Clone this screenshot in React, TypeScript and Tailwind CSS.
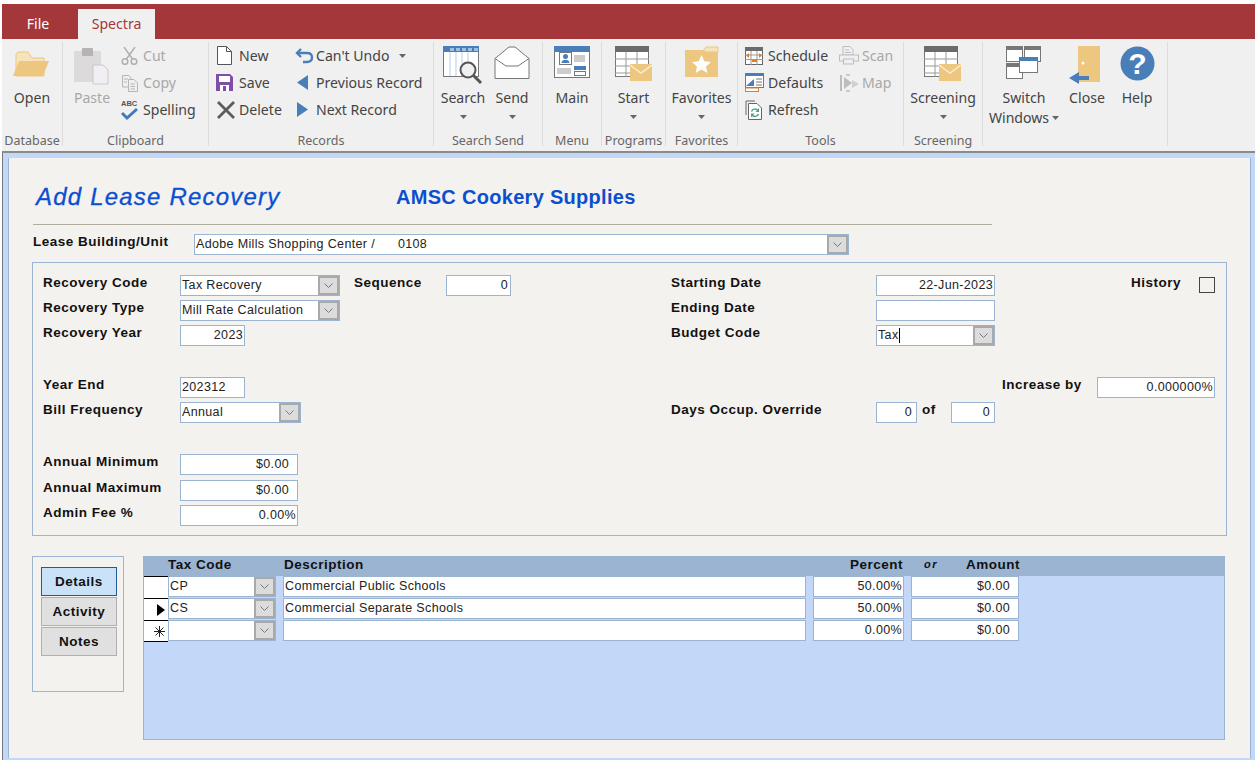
import React from 'react';

const OpenIcon = () => (
  <svg width="38" height="40" viewBox="0 0 38 40">
    <path d="M3 8V30H31V12H19L15 6H5Z" fill="#f6e3bd" stroke="#edc77f" />
    <path d="M0 30 L6 15H36L30 30Z" fill="#edc77f" />
  </svg>
);

const PasteIcon = () => (
  <svg width="36" height="40" viewBox="0 0 36 40">
    <rect x="0" y="5" width="27" height="31" fill="#dcdada" />
    <rect x="8" y="2" width="11" height="8" rx="1" fill="#b5b3b3" />
    <path d="M19 19H29L34 24V38H19Z" fill="#f1eff4" stroke="#c9c7cc" />
  </svg>
);

const CutIcon = () => (
  <svg width="17" height="18" viewBox="0 0 17 18" fill="none" stroke="#b0b0b0" strokeWidth="1.500">
    <path d="M3 0L11.500 12M14 0L5.500 12" />
    <circle cx="4" cy="14.500" r="2.800" />
    <circle cx="13" cy="14.500" r="2.800" />
  </svg>
);

const CopyIcon = () => (
  <svg width="18" height="18" viewBox="0 0 18 18" fill="none" stroke="#b5b5b5">
    <path d="M1.500 1.500H8L10 4V13H1.500Z" fill="#f0f0f0" />
    <path d="M7.500 5.500H13L16.500 9V17.500H7.500Z" fill="#f0f0f0" />
    <path d="M3 5H7M3 8H6M9.500 10H14M9.500 12.500H14M9.500 15H14" />
  </svg>
);

const SpellIcon = () => (
  <svg width="18" height="22" viewBox="0 0 18 22">
    <text x="0" y="7" fontSize="7.500" fontWeight="700" fontFamily="Liberation Sans, sans-serif" fill="#555">ABC</text>
    <path d="M1 14L6 19L16 10" fill="none" stroke="#3f7cba" strokeWidth="3" />
  </svg>
);

const NewIcon = () => (
  <svg width="17" height="19" viewBox="0 0 17 19">
    <path d="M1.500 .5H10.500L15.500 5.500V18.500H1.500Z" fill="#fff" stroke="#555" />
    <path d="M10.500 .5V5.500H15.500" fill="none" stroke="#555" />
  </svg>
);

const SaveIcon = () => (
  <svg width="17" height="17" viewBox="0 0 17 17">
    <path d="M0 0H14L17 3V17H0Z" fill="#7d4fa8" />
    <rect x="3" y="2" width="11" height="6" fill="#fff" />
    <rect x="4" y="11" width="9" height="6" fill="#fff" />
    <rect x="7" y="12" width="3" height="5" fill="#7d4fa8" />
  </svg>
);

const DeleteIcon = () => (
  <svg width="20" height="18" viewBox="0 0 20 18">
    <path d="M2 1L18 17M18 1L2 17" stroke="#5c5c5c" strokeWidth="2.800" />
  </svg>
);

const UndoIcon = () => (
  <svg width="19" height="16" viewBox="0 0 19 16" fill="none" stroke="#4a7eb8" strokeWidth="2.400">
    <path d="M6 1L2 5L6 9" />
    <path d="M2 5H12C15.500 5 17 7 17 9.500C17 12 15.500 14 12 14H8" />
  </svg>
);

const PrevIcon = () => (
  <svg width="11" height="15" viewBox="0 0 11 15">
    <path d="M11 0V15L0 7.500Z" fill="#4a7eb8" />
  </svg>
);

const NextIcon = () => (
  <svg width="11" height="15" viewBox="0 0 11 15">
    <path d="M0 0V15L11 7.500Z" fill="#4a7eb8" />
  </svg>
);

const SearchIcon = () => (
  <svg width="40" height="39" viewBox="0 0 40 39">
    <rect x=".5" y=".5" width="35" height="30" fill="#fff" stroke="#777" />
    <rect x="0" y="0" width="36" height="6" fill="#4a7eb8" />
    <path d="M7 2H11V5H7ZM13 2H17V5H13ZM19 2H23V5H19ZM25 2H29V5H25ZM31 2H35V5H31Z" fill="#9dbfe0" />
    <path d="M7 6V30M13 6V30M19 6V30M25 6V30" stroke="#b5cde8" />
    <circle cx="25" cy="24" r="7.500" fill="#f0f0f0" stroke="#555" strokeWidth="2" />
    <path d="M30.500 29.500L38 37" stroke="#555" strokeWidth="3" />
  </svg>
);

const SendIcon = () => (
  <svg width="36" height="34" viewBox="0 0 36 34" fill="#fff" stroke="#777">
    <path d="M1 12.500L15 1H21L35 12.500V32.500H1Z" />
    <path d="M1 12.500L12 20H24L35 12.500" fill="none" />
  </svg>
);

const MainIcon = () => (
  <svg width="36" height="32" viewBox="0 0 36 32">
    <rect x=".5" y=".5" width="35" height="31" fill="#fff" stroke="#777" />
    <rect x="0" y="0" width="36" height="6" fill="#4a7eb8" />
    <rect x="5.500" y="6.500" width="12" height="12" fill="#fff" stroke="#777" />
    <circle cx="11.500" cy="10.500" r="2.500" fill="#4a7eb8" />
    <path d="M7.500 17C7.500 12.500 15.500 12.500 15.500 17Z" fill="#4a7eb8" />
    <rect x="20" y="9" width="11" height="7" fill="#ccc" />
    <rect x="3" y="22" width="14" height="6" fill="#ccc" />
    <rect x="20" y="20" width="12" height="4" fill="#4a7eb8" />
    <rect x="20.500" y="25.500" width="11" height="4" fill="#fff" stroke="#777" />
  </svg>
);

const GridMailIcon = () => (
  <svg width="38" height="36" viewBox="0 0 38 36">
    <rect x=".5" y=".5" width="33" height="30" fill="#fff" stroke="#777" />
    <rect x="0" y="0" width="34" height="6" fill="#6b6b6b" />
    <path d="M0 13H34M0 20H34M0 27H34M11 6V31M22 6V31" stroke="#999" />
    <rect x="15" y="18" width="22" height="17" fill="#edc77f" />
    <path d="M15 19L26 27L37 19" fill="none" stroke="#fbeed2" strokeWidth="1.500" />
  </svg>
);

const FavIcon = () => (
  <svg width="34" height="32" viewBox="0 0 34 32">
    <path d="M18 5L21 1H33V6H18Z" fill="#f6e3bd" stroke="#edc77f" />
    <path d="M0 4H18L21 6H33V31H0Z" fill="#edc77f" />
    <path d="M16.500 9L19.300 15.200L26 15.900L21 20.400L22.400 27L16.500 23.600L10.600 27L12 20.400L7 15.900L13.700 15.200Z" fill="#fff" />
  </svg>
);

const ScheduleIcon = () => (
  <svg width="18" height="18" viewBox="0 0 18 18">
    <rect x=".5" y=".5" width="17" height="17" fill="#fff" stroke="#666" />
    <rect x="0" y="0" width="18" height="4" fill="#6b6b6b" />
    <path d="M0 8H18M0 12.500H18M6 4V18M12 4V18" stroke="#999" />
    <path d="M4 6L1 8.500L4 11ZM14 6L17 8.500L14 11Z" fill="#e0802c" />
    <path d="M7 14H12" stroke="#e0802c" strokeWidth="2" />
  </svg>
);

const DefaultsIcon = () => (
  <svg width="20" height="19" viewBox="0 0 20 19">
    <rect x=".5" y=".5" width="18" height="14" fill="#fff" stroke="#777" />
    <rect x="0" y="0" width="19" height="3" fill="#4a7eb8" />
    <path d="M1 13L9 6V13Z" fill="#4a7eb8" />
    <path d="M11 6H17M11 9H17M11 12H17" stroke="#777" />
    <rect x=".5" y="15" width="13" height="3.500" fill="#fff" stroke="#e0802c" />
  </svg>
);

const RefreshIcon = () => (
  <svg width="18" height="20" viewBox="0 0 18 20" fill="none">
    <path d="M1 1H10M1 1V15" stroke="#666" />
    <path d="M3.500 3.500H12L16.500 8V19.500H3.500Z" fill="#fff" stroke="#666" />
    <path d="M6.500 11.500C7.500 8.500 11.500 8.500 13 10.500M13.500 14C12.500 17 8.500 17 7 15" stroke="#4fa085" strokeWidth="1.500" />
    <path d="M14 8V12H10.500ZM6 17.500V13.500H9.500Z" fill="#4fa085" />
  </svg>
);

const ScanIcon = () => (
  <svg width="20" height="19" viewBox="0 0 20 19" fill="#f0f0f0" stroke="#bdbdbd">
    <path d="M4 .5H11L14 3.500V9H4Z" />
    <rect x=".5" y="9" width="19" height="6" />
    <rect x="4.500" y="13" width="10" height="5" />
    <path d="M6 4H10M6 6.500H12" fill="none" />
  </svg>
);

const MapIcon = () => (
  <svg width="20" height="18" viewBox="0 0 20 18">
    <path d="M1 1H3V17H1Z" fill="#bdbdbd" />
    <path d="M5 3L13 9L5 15Z" fill="#bdbdbd" />
    <path d="M13 6L20 10L13 14Z" fill="#cfcfcf" />
    <path d="M7 1H11M7 17H11" stroke="#bdbdbd" strokeWidth="1.500" />
  </svg>
);

const SwitchIcon = () => (
  <svg width="36" height="33" viewBox="0 0 36 33">
    <rect x=".5" y=".5" width="16" height="15" fill="#fff" stroke="#777" />
    <rect x="0" y="0" width="17" height="4" fill="#777" />
    <rect x="18.500" y=".5" width="16" height="15" fill="#fff" stroke="#777" />
    <rect x="18" y="0" width="17" height="4" fill="#777" />
    <rect x=".5" y="17.500" width="16" height="15" fill="#fff" stroke="#777" />
    <rect x="0" y="17" width="17" height="4" fill="#777" />
    <rect x="13.500" y="11.500" width="18" height="15" fill="#fff" stroke="#777" />
    <rect x="13" y="11" width="19" height="4" fill="#4a7eb8" />
  </svg>
);

const CloseIcon = () => (
  <svg width="36" height="38" viewBox="0 0 36 38">
    <rect x="9" y="0" width="22" height="36" fill="#edc77f" />
    <circle cx="14" cy="17" r="1.500" fill="#fff" />
    <path d="M0 32L10 26V30H20V34H10V38Z" fill="#4a7eb8" />
  </svg>
);

const HelpIcon = () => (
  <svg width="35" height="35" viewBox="0 0 36 36">
    <circle cx="18" cy="18" r="17.500" fill="#4a7eb8" />
    <text x="18" y="29" textAnchor="middle" fontSize="31" fontWeight="700" fontFamily="Liberation Sans, sans-serif" fill="#fff">?</text>
  </svg>
);

const Caret = () => (
  <svg width="7" height="4" viewBox="0 0 7 4" className="shrink-0">
    <path d="M0 0H7L3.500 4Z" fill="#666" />
  </svg>
);

const Group = ({ label, width, children }: { label?: string; width: string; children: React.ReactNode }) => (
  <div className={`${width} h-[104px] shrink-0 flex flex-col border-r border-[#dcdcdc]`}>
    <div className="h-[92px] shrink-0 flex">{children}</div>
    <div className="shrink-0 text-center text-[12.500px] leading-[14px] text-[#666] whitespace-nowrap">{label}</div>
  </div>
);

const Big = ({ width, icon, label, caret, off }: { width: string; icon: React.ReactNode; label: string; caret?: boolean; off?: boolean }) => (
  <div className={`${width} flex flex-col items-center`}>
    <div className="h-[45px] pt-[4px] flex justify-center">{icon}</div>
    <div className={`h-[22px] leading-[22px] text-[14.100px] whitespace-nowrap ${off ? 'text-[#a8a8a8]' : 'text-[#444]'}`}>{label}</div>
    {caret && <div className="h-[16px] flex items-center"><Caret /></div>}
  </div>
);

const Small = ({ iconWidth, icon, label, off, caret }: { iconWidth: string; icon: React.ReactNode; label: string; off?: boolean; caret?: boolean }) => (
  <div className="h-[27px] flex items-center whitespace-nowrap">
    <div className={`${iconWidth} shrink-0 flex items-center`}>{icon}</div>
    <span className={`text-[14.100px] ${off ? 'text-[#a8a8a8]' : 'text-[#444]'}`}>{label}</span>
    {caret && <span className="ml-[9px]"><Caret /></span>}
  </div>
);

const Ribbon = () => (
  <div className="h-[112px] pt-[3px] bg-[#f0f0f0] flex font-['Noto_Sans',sans-serif]">
    <Group label="Database" width="w-[61px]">
      <Big width="w-[60px]" icon={<OpenIcon />} label="Open" />
    </Group>
    <Group label="Clipboard" width="w-[146px]">
      <div className="ml-[9px] mr-[9px] w-[40px]">
        <Big width="w-full" icon={<PasteIcon />} label="Paste" off />
      </div>
      <div className="flex flex-col">
        <Small iconWidth="w-[22px]" icon={<CutIcon />} label="Cut" off />
        <Small iconWidth="w-[22px]" icon={<CopyIcon />} label="Copy" off />
        <Small iconWidth="w-[22px]" icon={<SpellIcon />} label="Spelling" />
      </div>
    </Group>
    <Group label="Records" width="w-[225px]">
      <div className="ml-[7px] w-[79px] flex flex-col">
        <Small iconWidth="w-[23px]" icon={<NewIcon />} label="New" />
        <Small iconWidth="w-[23px]" icon={<SaveIcon />} label="Save" />
        <Small iconWidth="w-[23px]" icon={<DeleteIcon />} label="Delete" />
      </div>
      <div className="flex flex-col">
        <Small iconWidth="w-[21px]" icon={<UndoIcon />} label="Can't Undo" caret />
        <Small iconWidth="w-[21px]" icon={<span className="ml-[2px]"><PrevIcon /></span>} label="Previous Record" />
        <Small iconWidth="w-[21px]" icon={<span className="ml-[2px]"><NextIcon /></span>} label="Next Record" />
      </div>
    </Group>
    <Group label="Search Send" width="w-[109px]">
      <div className="ml-[4px] flex">
        <Big width="w-[50px]" icon={<SearchIcon />} label="Search" caret />
        <Big width="w-[48px]" icon={<SendIcon />} label="Send" caret />
      </div>
    </Group>
    <Group label="Menu" width="w-[59px]">
      <Big width="w-full" icon={<MainIcon />} label="Main" />
    </Group>
    <Group label="Programs" width="w-[64px]">
      <Big width="w-full" icon={<GridMailIcon />} label="Start" caret />
    </Group>
    <Group label="Favorites" width="w-[72px]">
      <Big width="w-full" icon={<FavIcon />} label="Favorites" caret />
    </Group>
    <Group label="Tools" width="w-[166px]">
      <div className="ml-[7px] w-[94px] flex flex-col">
        <Small iconWidth="w-[23px]" icon={<ScheduleIcon />} label="Schedule" />
        <Small iconWidth="w-[23px]" icon={<DefaultsIcon />} label="Defaults" />
        <Small iconWidth="w-[23px]" icon={<RefreshIcon />} label="Refresh" />
      </div>
      <div className="flex flex-col">
        <Small iconWidth="w-[23px]" icon={<ScanIcon />} label="Scan" off />
        <Small iconWidth="w-[23px]" icon={<MapIcon />} label="Map" off />
      </div>
    </Group>
    <Group label="Screening" width="w-[79px]">
      <Big width="w-full" icon={<GridMailIcon />} label="Screening" caret />
    </Group>
    <Group width="w-[185px]">
      <div className="ml-[7px] flex">
        <div className="w-[68px] flex flex-col items-center">
          <div className="h-[45px] pt-[4px]"><SwitchIcon /></div>
          <div className="h-[22px] leading-[22px] text-[14.100px] text-[#444]">Switch</div>
          <div className="leading-[18px] text-[14.100px] text-[#444] whitespace-nowrap flex items-center gap-[3px]">Windows <Caret /></div>
        </div>
        <Big width="w-[58px]" icon={<CloseIcon />} label="Close" />
        <Big width="w-[42px]" icon={<HelpIcon />} label="Help" />
      </div>
    </Group>
  </div>
);

const labelCls = "text-[13.500px] leading-[15px] font-bold tracking-[0.5px] text-[#111] whitespace-nowrap";
const valueCls = "text-[12.500px] tracking-[0.35px] text-[#222] whitespace-pre";

const Field = ({ width, value, right, pad = '' }: { width: string; value?: string; right?: boolean; pad?: string }) => (
  <div className={`${width} h-[21px] shrink-0 bg-white border border-[#9ab4d2] flex items-center pl-[1px] ${pad || 'pr-[1px]'} ${right ? 'justify-end' : ''} ${valueCls}`}>
    {value}
  </div>
);

const Chevron = () => (
  <svg width="9" height="5" viewBox="0 0 9 5" fill="none" stroke="#777">
    <path d="M.5 .5L4.500 4.500L8.500 .5" />
  </svg>
);

const Combo = ({ width, value, cursor }: { width: string; value?: string; cursor?: boolean }) => (
  <div className={`${width} h-[21px] shrink-0 bg-white border border-[#9ab4d2] flex items-center ${valueCls}`}>
    <span className="flex-1 pl-[1px] flex items-center overflow-hidden">
      {value}
      {cursor && <span className="w-px h-[15px] bg-black" />}
    </span>
    <span className="w-[21px] h-full shrink-0 bg-[#dcdcdc] border-2 border-[#a9a9a9] flex items-center justify-center">
      <Chevron />
    </span>
  </div>
);

const Row = ({ className = '', children }: { className?: string; children: React.ReactNode }) => (
  <div className={`h-[21px] flex items-start ${className}`}>{children}</div>
);

const Fields = () => (
  <div className="mt-[7px] ml-[23px] w-[1195px] h-[274px] border border-[#9ab4d2] pt-[12px] pl-[10px] flex">
    <div className="w-[628px] shrink-0">
      <Row>
        <span className={`${labelCls} w-[137px]`}>Recovery Code</span>
        <Combo width="w-[160px]" value="Tax Recovery" />
        <span className={`${labelCls} ml-[14px] w-[92px]`}>Sequence</span>
        <Field width="w-[65px]" value="0" right pad="pr-[2px]" />
      </Row>
      <Row className="mt-[4px]">
        <span className={`${labelCls} w-[137px]`}>Recovery Type</span>
        <Combo width="w-[160px]" value="Mill Rate Calculation" />
      </Row>
      <Row className="mt-[4px]">
        <span className={`${labelCls} w-[137px]`}>Recovery Year</span>
        <Field width="w-[65px]" value="2023" right pad="pr-[1px]" />
      </Row>
      <Row className="mt-[31px]">
        <span className={`${labelCls} w-[137px]`}>Year End</span>
        <Field width="w-[65px]" value="202312" />
      </Row>
      <Row className="mt-[4px]">
        <span className={`${labelCls} w-[137px]`}>Bill Frequency</span>
        <Combo width="w-[121px]" value="Annual" />
      </Row>
      <Row className="mt-[31px]">
        <span className={`${labelCls} w-[137px]`}>Annual Minimum</span>
        <Field width="w-[118px]" value="$0.00" right pad="pr-[8px]" />
      </Row>
      <Row className="mt-[5px]">
        <span className={`${labelCls} w-[137px]`}>Annual Maximum</span>
        <Field width="w-[118px]" value="$0.00" right pad="pr-[8px]" />
      </Row>
      <Row className="mt-[4px]">
        <span className={`${labelCls} w-[137px]`}>Admin Fee %</span>
        <Field width="w-[118px]" value="0.00%" right />
      </Row>
    </div>
    <div className="w-[544px] shrink-0">
      <Row>
        <span className={`${labelCls} w-[205px]`}>Starting Date</span>
        <Field width="w-[119px]" value="22-Jun-2023" right />
        <span className={`${labelCls} ml-[136px] w-[68px]`}>History</span>
        <span className="mt-[2px] w-[16px] h-[16px] border border-[#444] bg-[#f4f2ee]" />
      </Row>
      <Row className="mt-[4px]">
        <span className={`${labelCls} w-[205px]`}>Ending Date</span>
        <Field width="w-[119px]" />
      </Row>
      <Row className="mt-[4px]">
        <span className={`${labelCls} w-[205px]`}>Budget Code</span>
        <Combo width="w-[119px]" value="Tax" cursor />
      </Row>
      <Row className="mt-[31px]">
        <span className={`${labelCls} ml-[331px] w-[95px]`}>Increase by</span>
        <Field width="w-[118px]" value="0.000000%" right />
      </Row>
      <Row className="mt-[4px]">
        <span className={`${labelCls} w-[205px]`}>Days Occup. Override</span>
        <Field width="w-[41px]" value="0" right pad="pr-[4px]" />
        <span className={`${labelCls} ml-[5px] w-[29px]`}>of</span>
        <Field width="w-[44px]" value="0" right pad="pr-[4px]" />
      </Row>
    </div>
  </div>
);

const SideButton = ({ label, active }: { label: string; active?: boolean }) => (
  <div className={`w-[76px] h-[29px] mb-px pb-px border flex items-center justify-center ${labelCls} ${active ? 'bg-[#c9e2f8] border-[#1f5c99]' : 'bg-[#e0e0e0] border-[#b0b0b0]'}`}>
    {label}
  </div>
);

const taxRows = [
  { mark: '', code: 'CP', desc: 'Commercial Public Schools', pct: '50.00%', amt: '$0.00' },
  { mark: 'arrow', code: 'CS', desc: 'Commercial Separate Schools', pct: '50.00%', amt: '$0.00' },
  { mark: 'new', code: '', desc: '', pct: '0.00%', amt: '$0.00' },
];

const TaxTable = () => (
  <div className="ml-[19px] w-[1082px] h-[184px] bg-[#c3d8f8] border border-[#9ab4d2] border-t-0">
    <div className="h-[20px] pb-[4px] bg-[#9ab4d2] flex items-center">
      <span className={`${labelCls} ml-[24px] w-[116px]`}>Tax Code</span>
      <span className={`${labelCls} w-[565px]`}>Description</span>
      <span className={`${labelCls} w-[54px] flex justify-end`}>Percent</span>
      <span className="ml-[21px] w-[14px] text-[11px] tracking-[1.500px] italic font-bold text-[#111]">or</span>
      <span className={`${labelCls} ml-[28px] w-[53px]`}>Amount</span>
    </div>
    <div>
      {taxRows.map((row) => (
        <div key={row.code || 'new'} className="h-[22px] flex items-start">
          <div className={`w-[24px] h-[22px] bg-white border-t border-black flex items-center justify-end pr-[3px] text-[#222] ${row.mark === 'new' ? 'border-b' : ''}`}>
            {row.mark === 'arrow' && (
              <svg width="8" height="12" viewBox="0 0 8 12"><path d="M0 0L8 6L0 12Z" fill="#000" /></svg>
            )}
            {row.mark === 'new' && (
              <svg width="11" height="11" viewBox="0 0 11 11" stroke="#222"><path d="M5.500 0V11M0 5.500H11M1.500 1.500L9.500 9.500M9.500 1.500L1.500 9.500" /></svg>
            )}
          </div>
          <Combo width="w-[108px]" value={row.code} />
          <div className="w-[7px]" />
          <Field width="w-[523px]" value={row.desc} />
          <div className="w-[7px]" />
          <Field width="w-[91px]" value={row.pct} right />
          <div className="w-[7px]" />
          <Field width="w-[108px]" value={row.amt} right pad="pr-[8px]" />
        </div>
      ))}
    </div>
  </div>
);

export default function App() {
  return (
    <div className="w-[1255px] h-[762px] overflow-hidden bg-white pt-[4px] pl-[2px] font-['Liberation_Sans',sans-serif]">
      <div className="h-[35px] bg-[#a4373a] flex items-end font-['Noto_Sans',sans-serif] text-[14.100px]">
        <div className="w-[76px] h-[30px] leading-[30px] pr-[4px] text-center text-white">File</div>
        <div className="w-[77px] h-[30px] leading-[30px] text-center bg-[#f0f0f0] text-[#a4373a]">Spectra</div>
      </div>
      <Ribbon />
      <div className="h-[2px] bg-[#8a8a8a]" />
      <div className="h-[607px] bg-[#c2d8f8] border-l border-[#777] pt-[5px] pl-[5px] pr-[4px]">
        <div className="h-[600px] bg-[#f4f2ee] border-l border-r border-[#9ab4d2] pt-[24px]">
          <div className="flex items-center h-[30px] pl-[27px]">
            <h1 className="w-[360px] text-[24px] italic tracking-[1.200px] [-webkit-text-stroke:0.3px_#0b4fd0] text-[#0b4fd0] whitespace-nowrap">Add Lease Recovery</h1>
            <h2 className="text-[20px] font-bold tracking-[0.300px] text-[#0b4fd0] whitespace-nowrap">AMSC Cookery Supplies</h2>
          </div>
          <div className="ml-[24px] mt-[12px] w-[959px] h-px bg-[#b0ad9e]" />
          <div className="mt-[9px] ml-[24px] flex items-start">
            <span className={`${labelCls} w-[161px]`}>Lease Building/Unit</span>
            <Combo width="w-[655px]" value="Adobe Mills Shopping Center /      0108" />
          </div>
          <Fields />
          <div className="mt-[20px] ml-[23px] flex items-start">
            <div className="w-[92px] h-[136px] shrink-0 border border-[#9ab4d2] pt-[10px] pl-[8px]">
              <SideButton label="Details" active />
              <SideButton label="Activity" />
              <SideButton label="Notes" />
            </div>
            <TaxTable />
          </div>
        </div>
      </div>
    </div>
  );
}
